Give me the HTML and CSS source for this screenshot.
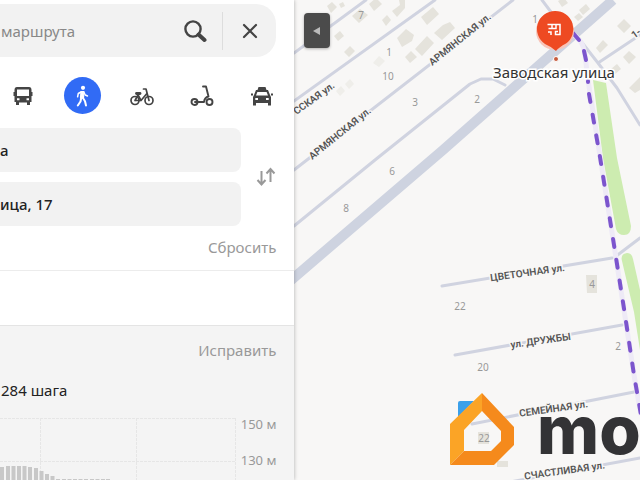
FILE: index.html
```
<!DOCTYPE html>
<html lang="ru">
<head>
    <meta charset="UTF-8">
    <meta name="viewport" content="width=device-width, initial-scale=1.0">
    <title>Маршрут пешком</title>
    <link rel="stylesheet" href="styles.css">
</head>
<body>
    <aside class="sidebar">
        <form class="route-form">
            <div class="search-bar">
                <input class="search-input" type="text" placeholder="маршрута" aria-label="Поиск маршрута">
                <button class="icon-button search-button" type="button" aria-label="Найти">
                    <svg width="24" height="24" viewBox="0 0 24 24">
                        <circle cx="10" cy="10" r="7.6" fill="none" stroke="#444" stroke-width="2.4"/>
                        <path d="M15.5 15.5L21.5 21" stroke="#444" stroke-width="4" stroke-linecap="round"/>
                    </svg>
                </button>
                <button class="icon-button close-button" type="button" aria-label="Закрыть">
                    <svg width="16" height="16" viewBox="0 0 16 16">
                        <path d="M2 2L14 14M14 2L2 14" stroke="#444" stroke-width="2.2" stroke-linecap="round"/>
                    </svg>
                </button>
            </div>

            <div class="modes">
                <button class="mode" type="button" aria-label="Транспорт">
                    <svg width="24" height="24" viewBox="0 0 24 24">
                        <path fill="#444" fill-rule="evenodd" d="M6 3H18Q20.5 3 20.5 6V8H21.5V12H20.5V18H19V21H16V18.5H8V21H5V18H3.5V12H2.5V8H3.5V6Q3.5 3 6 3ZM6 5.5V12H18V5.5ZM6 14.2V16.2H8.5V14.2ZM15.5 14.2V16.2H18V14.2Z"/>
                    </svg>
                </button>
                <button class="mode active" type="button" aria-label="Пешком">
                    <svg width="24" height="24" viewBox="0 0 24 24" fill="none" stroke="#fff" stroke-linecap="round" stroke-linejoin="round">
                        <circle cx="13" cy="3.8" r="2.1" fill="#fff" stroke="none"/>
                        <path d="M11 7.5L14 7.5L13.5 14L10.5 14Z" fill="#fff" stroke-width="1.2"/>
                        <path d="M11 8L8.3 9.5L7.6 12.8M14 8.5L15.3 11L17.5 12" stroke-width="1.5"/>
                        <path d="M11.2 14L10.5 17.5L7.8 21.5M13 14L15 17.2L16 21.5" stroke-width="2"/>
                    </svg>
                </button>
                <button class="mode" type="button" aria-label="Велосипед">
                    <svg width="24" height="24" viewBox="0 0 24 24" fill="none" stroke="#444" stroke-width="1.7" stroke-linecap="round" stroke-linejoin="round">
                        <circle cx="5" cy="16.5" r="4"/>
                        <circle cx="19" cy="16.5" r="4"/>
                        <path d="M5 16.5H11L16.5 10M5 16.5L8 11L11 16.5M13.500 5H16L19 16.5"/>
                        <path d="M6.5 9.5H10" stroke-width="2.8"/>
                    </svg>
                </button>
                <button class="mode" type="button" aria-label="Самокат">
                    <svg width="24" height="24" viewBox="0 0 24 24" fill="none" stroke="#444" stroke-width="1.9" stroke-linecap="round" stroke-linejoin="round">
                        <circle cx="4.5" cy="18" r="3"/>
                        <circle cx="19.5" cy="18" r="3"/>
                        <path d="M5 18H14Q14.5 13.5 18.5 12.5L16 2.500H13"/>
                    </svg>
                </button>
                <button class="mode" type="button" aria-label="Такси">
                    <svg width="24" height="24" viewBox="0 0 24 24">
                        <path fill="#444" fill-rule="evenodd" d="M8.5 3H15.5L16.5 6H18L20 11L21 13V21.5H18V19H6V21.5H3V13L4 11L6 6H7.5ZM7.4 8L6 11.5H18L16.6 8ZM5.3 14V16H8V14ZM16 14V16H18.7V14Z"/>
                        <path d="M1 10.5H3M21 10.5H23" stroke="#444" stroke-width="2"/>
                    </svg>
                </button>
            </div>

            <div class="points">
                <div class="point-list">
                    <input class="point" type="text" value="а" aria-label="Откуда">
                    <input class="point" type="text" value="ица, 17" aria-label="Куда">
                </div>
                <button class="icon-button swap-button" type="button" aria-label="Поменять местами">
                    <svg width="20" height="20" viewBox="0 0 20 20" fill="none" stroke="#999" stroke-width="2">
                        <path d="M5.5 4V17M1.5 13L5.5 17.5L9.5 13M14.5 15V2M10.5 6.5L14.5 2L18.5 6.5"/>
                    </svg>
                </button>
            </div>

            <button class="text-button" type="reset">Сбросить</button>
        </form>

        <section class="details">
            <button class="text-button" type="button">Исправить</button>
            <p class="steps">284 шага</p>
            <div class="chart">
                <svg class="chart-plot" viewBox="0 0 236 70" preserveAspectRatio="xMinYMin slice">
                    <path class="chart-grid" d="M0 8.5H235M0 51.5H235M40.5 8V70M136.5 8V70M235.5 8V70"/>
                    <path class="chart-bars" d="M2 70V57M8 70V56M13.5 70V56M19 70V56M24.5 70V56M30 70V57M36 70V58M41.5 70V61M47 70V64M52.5 70V66M58 70V69M64 70V69M69.5 70V69M75 70V69M80.5 70V69M86 70V69M92 70V69M97.5 70V69M103 70V69M108 70V69"/>
                </svg>
                <div class="chart-axis">
                    <span>150 м</span>
                    <span>130 м</span>
                </div>
            </div>
        </section>
    </aside>

    <main class="map">
        <svg class="map-canvas" viewBox="294 0 346 480" preserveAspectRatio="xMinYMin slice">
            <!-- дома -->
            <g class="buildings">
                <path d="M327 6L332 2L337 7L331 13ZM339 4L343 2L345 6L341 8ZM352 16L360 9L368 15L359 23ZM369 4L376 -2L382 4L374 11ZM382 20L387 15L391 20L386 26ZM392 11L400 5L399 0L405 0L405 8L397 17ZM421 17L433 7L439 14L427 25ZM397 38L406 29L414 35L412 41L402 47ZM415 49L427 36L434 43L422 56ZM434 33L443 25L450 22L455 28L442 40ZM405 57L411 51L417 57L410 63ZM334 36L340 31L344 36L338 41ZM344 52L350 46L355 51L349 57Z"/>
                <path class="faint" d="M373 63L379 56L385 61L379 67ZM336 91L341 86L345 91L340 96ZM345 84L350 79L354 84L349 89Z"/>
                <path d="M558 1L564 -2L568 3L562 7ZM579 10L586 4L590 9L583 15ZM574 17L579 13L583 17L578 21ZM596 48L603 40L608 45L600 53ZM617 26L624 19L631 26L624 33ZM623 57L629 51L636 57L629 64ZM611 69L617 64L621 69L615 74ZM629 88L640 77V90L635 93ZM586 275H597V293H587Z"/>
                <path d="M497 461H508V467H497ZM478 432H489V444H478Z"/>
            </g>

            <!-- парк -->
            <path class="park" d="M593 80L606 83L617 158L631 226Q631 235 624 235Q618 235 616 229L603 158Z"/>
            <path class="park" d="M622 261Q620 254 627 253Q632 253 633 259L640 290V350L634 312Z"/>

            <!-- дороги -->
            <g class="roads">
                <path d="M294 53L366 0M294 101L435 0M294 170L513 0M294 226L375 160L470 84L481 79L493 79L505 85"/>
                <path d="M542 0L551 12M580 40L598 63L640 35M598 63L617 88L640 125M615 257L640 238"/>
                <path d="M442 286L612 258M455 355L622 325M472 424L634 392M510 482L640 458"/>
            </g>
            <path class="highway" d="M290 281L443 150L613 0"/>

            <!-- маршрут -->
            <path class="route-base" d="M570 33Q583 38 585 55L588 80L614 245L634 375L641 415"/>
            <path class="route" d="M573 33L579 40M584 51L586 60M588 81L588 82"/>
            <path class="route route-dashed" d="M589 94L600 157L614 245L625 315L634 375L641 415"/>

            <g class="house-numbers">
                <text x="361" y="19">7</text>
                <text x="389" y="56">1</text>
                <text x="388" y="80">10</text>
                <text x="415" y="106">3</text>
                <text x="477" y="103">2</text>
                <text x="535" y="23">1</text>
                <text x="392" y="175">6</text>
                <text x="346" y="212">8</text>
                <text x="460" y="310">22</text>
                <text x="592" y="288">4</text>
                <text x="618" y="350">2</text>
                <text x="483" y="371">20</text>
                <text x="484" y="442">22</text>
            </g>

            <g class="streets">
                <text transform="translate(316 101) rotate(-36)">ССКАЯ ул.</text>
                <text transform="translate(342 136) rotate(-39)">АРМЯНСКАЯ ул.</text>
                <text transform="translate(462 42) rotate(-39)">АРМЯНСКАЯ ул.</text>
                <text transform="translate(638 36) rotate(-35)">1-</text>
                <text transform="translate(528 276) rotate(-8)">ЦВЕТОЧНАЯ ул.</text>
                <text transform="translate(541 344) rotate(-8)">ул. ДРУЖБЫ</text>
                <text transform="translate(554 412) rotate(-8)">СЕМЕЙНАЯ ул.</text>
                <text transform="translate(565 474) rotate(-8)">СЧАСТЛИВАЯ ул.</text>
            </g>

            <!-- метка остановки -->
            <circle class="pin-glow" cx="555" cy="31" r="19"/>
            <path class="pin" d="M555 11A18 18 0 0 1 566 43.5Q559 47 556 51Q552 47 545 44A18 18 0 0 1 555 11Z"/>
            <path class="pin-icon" d="M547.500 24.500H560V34.500H555.500V31.500H558M548.500 28.500H556V25M552 25V28M548 32H551V35"/>
            <circle class="pin-dot" cx="556" cy="59" r="2.5"/>
            <text class="place" x="554" y="78">Заводская улица</text>

            <!-- логотип -->
            <path fill="#3ba0ea" d="M458 403Q458 401 460 401H474L458 417Z"/>
            <path fill="#fba426" d="M482 393V411L464 430V451L450 465V424Z"/>
            <path fill="#f58a1c" d="M482 393L514 427V445L494 465H450L464 451H491L501 441V431L482 411Z"/>
            <text class="brand" x="537" y="454">mo</text>
        </svg>
        <button class="collapse-button" type="button" aria-label="Свернуть панель">
            <svg width="8" height="8" viewBox="0 0 8 8"><path d="M0 4L7 0V8Z" fill="#bbb"/></svg>
        </button>
    </main>
</body>
</html>
```

FILE: styles.css
```
* {
    box-sizing: border-box;
}

body {
    margin: 0;
    height: 100vh;
    display: flex;
    overflow: hidden;
    font-family: "Noto Sans", "Open Sans", sans-serif;
    font-size: 15px;
    color: #222;
    background-color: #f8f7f6;
}

button,
input {
    font: inherit;
    color: inherit;
    border: none;
    padding: 0;
    background: none;
}

button {
    cursor: pointer;
}

svg {
    display: block;
}

/* левая панель */
.sidebar {
    flex: 0 0 46%;
    min-width: 0;
    display: flex;
    flex-direction: column;
    background: #fff;
    box-shadow: 0 0 4px rgba(0, 0, 0, 0.3);
    z-index: 1;
}

.route-form {
    display: flex;
    flex-direction: column;
    padding: 4px 18px 13px 0;
    margin-bottom: 54px;
    border-bottom: 1px solid #ececec;
}

.search-bar {
    display: flex;
    align-items: center;
    height: 53px;
    background: #f2f2f2;
    border-radius: 0 20px 20px 0;
}

.search-input {
    flex: 1;
    min-width: 0;
    padding-left: 1px;
}

.search-input::placeholder {
    color: #888;
    opacity: 1;
}

.icon-button {
    display: flex;
    align-items: center;
    justify-content: center;
}

.search-button {
    width: 56px;
    height: 38px;
    border-right: 1px solid #ddd;
}

.close-button {
    width: 53px;
    height: 38px;
}

.modes {
    display: flex;
    justify-content: space-between;
    padding: 20px 0 14px 4px;
    margin-right: -4px;
}

.mode {
    display: flex;
    align-items: center;
    justify-content: center;
    width: 37px;
    height: 37px;
    border-radius: 50%;
}

.mode.active {
    background: #316bf5;
}

.points {
    display: flex;
    align-items: center;
    gap: 15px;
}

.point-list {
    flex: 1;
    min-width: 0;
    display: flex;
    flex-direction: column;
    gap: 10px;
}

.point {
    width: 100%;
    height: 44px;
    font-weight: 500;
    background: #f2f2f2;
    border-radius: 0 8px 8px 0;
}

.swap-button {
    width: 20px;
    height: 44px;
}

.text-button {
    align-self: flex-end;
    line-height: 20px;
    color: #999;
}

.route-form .text-button {
    margin-top: 11px;
}

/* профиль высот */
.details {
    flex: 1;
    display: flex;
    flex-direction: column;
    padding: 14px 18px 0 0;
    background: #f4f4f4;
    border-top: 1px solid #e4e4e4;
}

.steps {
    margin: 20px 0 10px;
    padding-left: 1px;
    line-height: 20px;
}

.chart {
    display: flex;
    gap: 5px;
}

.chart-plot {
    flex: 1;
    min-width: 0;
    height: 70px;
}

.chart-grid {
    fill: none;
    stroke: #e6e6e6;
    stroke-dasharray: 3 1;
}

.chart-bars {
    stroke: #c8c8c8;
    stroke-width: 4;
}

.chart-axis {
    display: flex;
    flex-direction: column;
    gap: 16px;
    padding-top: 4px;
    font-size: 13px;
    line-height: 20px;
    color: #999;
}

/* карта */
.map {
    flex: 1;
    min-width: 0;
    position: relative;
}

.map-canvas {
    width: 100%;
    height: 100%;
}

.buildings {
    fill: #e5e3dc;
}

.faint {
    fill: #efeeea;
}

.park {
    fill: #cdecb0;
}

.roads {
    fill: none;
    stroke: #d0d3e0;
    stroke-width: 3;
    stroke-linecap: round;
    stroke-linejoin: round;
}

.highway {
    fill: none;
    stroke: #ced3e0;
    stroke-width: 10;
}

.route-base {
    fill: none;
    stroke: #eeeaf6;
    stroke-width: 5;
}

.route {
    fill: none;
    stroke: #7c55cd;
    stroke-width: 4;
    stroke-linecap: round;
}

.route-dashed {
    stroke-dasharray: 8 13;
}

.house-numbers {
    font-size: 10px;
    text-anchor: middle;
    fill: #999;
}

.streets {
    font-family: Roboto, "Noto Sans", sans-serif;
    font-size: 10px;
    font-weight: 600;
    text-anchor: middle;
    fill: #555;
    stroke: #f8f7f6;
    stroke-width: 3;
    paint-order: stroke;
}

.place {
    font-size: 15px;
    text-anchor: middle;
    fill: #333;
    stroke: #fff;
    stroke-width: 3;
    paint-order: stroke;
}

.pin-glow {
    fill: #f8c4b8;
}

.pin {
    fill: #ee4a22;
}

.pin-icon {
    fill: none;
    stroke: #fff;
    stroke-width: 1.5px;
}

.pin-dot {
    fill: #c65a3c;
    stroke: #fff;
}

.brand {
    font-family: Inter, sans-serif;
    font-size: 67px;
    font-weight: 800;
    fill: #333335;
}

.collapse-button {
    position: absolute;
    top: 13px;
    left: 10px;
    display: flex;
    align-items: center;
    justify-content: center;
    width: 26px;
    height: 35px;
    background: #4b4b4b;
    border-radius: 4px;
    box-shadow: 0 1px 3px rgba(0, 0, 0, 0.3);
}
```
